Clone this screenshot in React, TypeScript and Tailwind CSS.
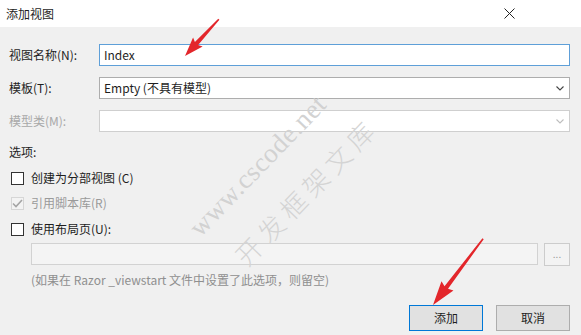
import React from "react";

const font = { fontFamily: '"Noto Sans CJK SC", "Noto Sans", sans-serif' };

function Chevron({ color }: { color: string }) {
  return (
    <svg width="8" height="5" viewBox="0 0 8 5" className="shrink-0">
      <polyline points="0.5,0.5 4,4 7.5,0.5" fill="none" stroke={color} strokeWidth="1.1" />
    </svg>
  );
}

function Box({ disabled, checked }: { disabled?: boolean; checked?: boolean }) {
  return (
    <div
      className={
        "w-[13px] h-[13px] ml-[2px] mr-[7px] shrink-0 flex items-center justify-center border " +
        (disabled ? "border-[#d6d6d6] bg-[#f3f3f3]" : "border-[#333333] bg-white")
      }
    >
      {checked && (
        <svg width="11" height="9" viewBox="0 0 11 9">
          <polyline points="1,4.5 4,7.5 10,1" fill="none" stroke="#a5a5a5" strokeWidth="1.6" />
        </svg>
      )}
    </div>
  );
}

function Arrow({ tx, ty, angle, len, head, hw }: { tx: number; ty: number; angle: number; len: number; head: number; hw: number }) {
  const pts = [
    [0, 0],
    [head + 2, -hw],
    [head, -2.2],
    [len, -0.8],
    [len, 0.8],
    [head, 2.2],
    [head + 2, hw],
  ]
    .map((p) => p.join(","))
    .join(" ");
  return (
    <g transform={`translate(${tx} ${ty}) rotate(${angle})`}>
      <polygon points={pts} fill="#e3262b" />
    </g>
  );
}

export default function App() {
  return (
    <div className="relative w-[581px] h-[335px] bg-[#f0f0f0] overflow-hidden text-[12px] text-[#1e1e1e]" style={font}>
      <div className="h-[27px] bg-white flex items-center justify-between pl-[6px] pr-[66px]">
        <span className="text-[12px] leading-none">添加视图</span>
        <svg width="11" height="11" viewBox="0 0 11 11">
          <path d="M0.5 0.5 L10.5 10.5 M10.5 0.5 L0.5 10.5" stroke="#222" strokeWidth="1" />
        </svg>
      </div>

      <div className="pl-[9px] pr-[11px] flex flex-col">
        <div className="flex items-center h-[22px] mt-[17px]">
          <span className="w-[90px] shrink-0">视图名称(N):</span>
          <div className="flex-1 h-[22px] border border-[#5e9fd8] bg-white flex items-center pl-[4px]">Index</div>
        </div>
        <div className="flex items-center h-[22px] mt-[11px]">
          <span className="w-[90px] shrink-0">模板(T):</span>
          <div className="flex-1 h-[22px] border border-[#adadad] bg-white flex items-center justify-between pl-[4px] pr-[5px]">
            <span>Empty (不具有模型)</span>
            <Chevron color="#444" />
          </div>
        </div>
        <div className="flex items-center h-[22px] mt-[11px]">
          <span className="w-[90px] shrink-0 text-[#a8a8a8]">模型类(M):</span>
          <div className="flex-1 h-[22px] border border-[#cfcfcf] bg-white flex items-center justify-end pr-[5px]">
            <Chevron color="#bdbdbd" />
          </div>
        </div>

        <div className="h-[16px] leading-[16px] mt-[12px]">选项:</div>

        <div className="flex items-center h-[16px] mt-[10px]">
          <Box />
          <span>创建为分部视图 (C)</span>
        </div>
        <div className="flex items-center h-[16px] mt-[9px]">
          <Box disabled checked />
          <span className="text-[#9a9a9a]">引用脚本库(R)</span>
        </div>
        <div className="flex items-center h-[16px] mt-[10px]">
          <Box />
          <span>使用布局页(U):</span>
        </div>

        <div className="flex items-start mt-[6px] ml-[22px] gap-[6px]">
          <div className="flex-1 h-[22px] border border-[#d2d2d2] bg-[#f4f4f4]" />
          <div className="w-[26px] h-[23px] border border-[#cccccc] bg-[#f3f3f3] flex items-center justify-center text-[#9a9a9a] text-[10px] leading-none pb-[2px]">
            ...
          </div>
        </div>

        <div className="h-[16px] leading-[16px] mt-[6px] ml-[22px] text-[#8f8f8f]">
          (如果在 Razor _viewstart 文件中设置了此选项，则留空)
        </div>

        <div className="flex justify-end gap-[13px] mt-[17px]">
          <div className="w-[74px] h-[26px] border border-[#0078d7] bg-[#e1e1e1] flex items-center justify-center">添加</div>
          <div className="w-[74px] h-[26px] border border-[#adadad] bg-[#e1e1e1] flex items-center justify-center">取消</div>
        </div>
      </div>

      <span
        className="absolute left-[258px] top-[166px] -translate-x-1/2 -translate-y-1/2 -rotate-[46deg] whitespace-nowrap text-[27px] leading-none tracking-[0.5px] text-[#d2d2d2] pointer-events-none"
        style={{ fontFamily: '"Liberation Serif", serif', fontWeight: 300 }}
      >
        www.cscode.net
      </span>
      <span
        className="absolute left-[306px] top-[191px] -translate-x-1/2 -translate-y-1/2 -rotate-[46deg] whitespace-nowrap text-[26px] leading-none tracking-[6px] text-[#d4d4d4] pointer-events-none"
        style={{ fontFamily: '"Noto Sans CJK SC", serif', fontWeight: 300 }}
      >
        开发框架文库
      </span>

      <svg className="absolute left-0 top-0 pointer-events-none" width="581" height="335">
        <Arrow tx={185} ty={56} angle={-47.4} len={50} head={17} hw={6.5} />
        <Arrow tx={433} ty={305} angle={-52.9} len={83} head={22} hw={7.5} />
      </svg>
    </div>
  );
}
